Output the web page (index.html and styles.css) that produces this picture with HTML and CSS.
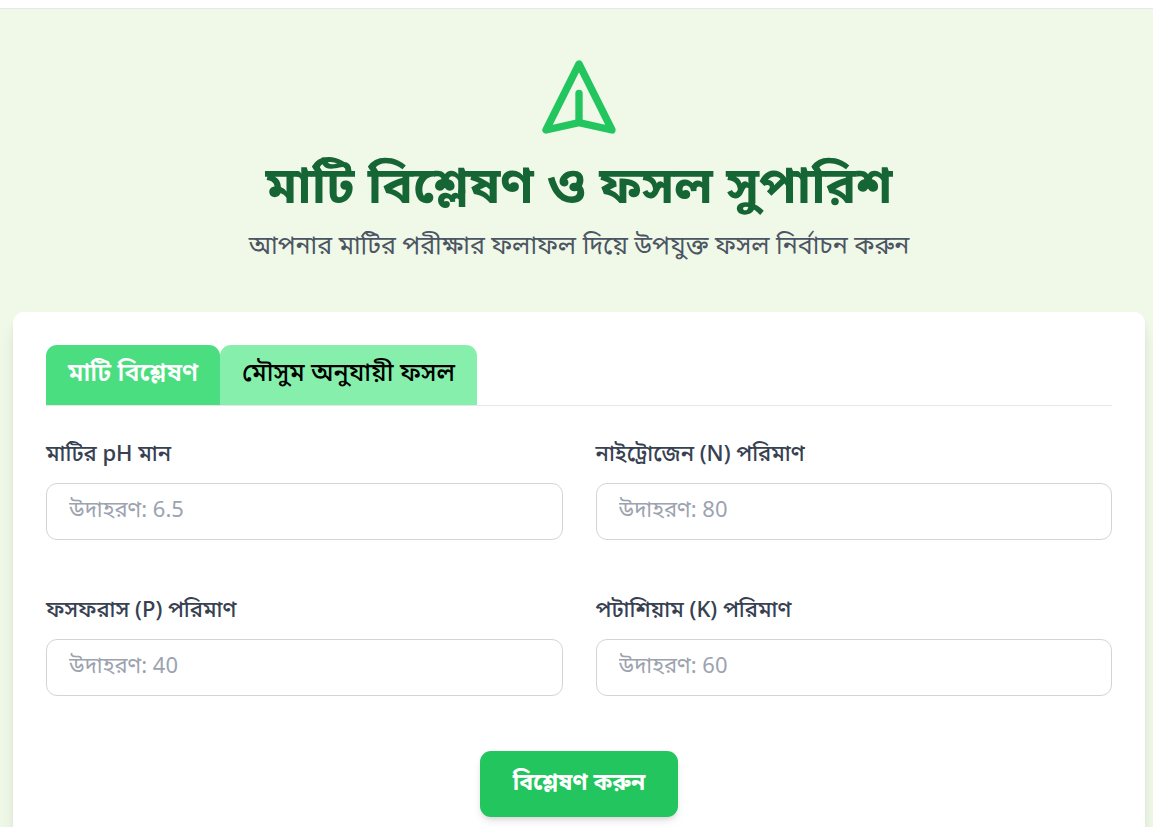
FILE: index.html
```html
<!DOCTYPE html>
<html lang="bn">
<head>
<meta charset="utf-8">
<meta name="viewport" content="width=device-width, initial-scale=1">
<title>মাটি বিশ্লেষণ ও ফসল সুপারিশ</title>
<link rel="stylesheet" href="styles.css">
</head>
<body>
<header class="topbar"></header>
<main class="page">
  <section class="hero">
    <svg class="hero-icon" viewBox="0 0 24 24" fill="none" stroke="currentColor" stroke-width="2" stroke-linecap="round" stroke-linejoin="round" aria-hidden="true"><path d="M12 19l9 2-9-18-9 18 9-2zm0 0v-8"/></svg>
    <h1 class="title">মাটি বিশ্লেষণ ও ফসল সুপারিশ</h1>
    <p class="subtitle">আপনার মাটির পরীক্ষার ফলাফল দিয়ে উপযুক্ত ফসল নির্বাচন করুন</p>
  </section>
  <section class="card">
    <div class="tabs" role="tablist">
      <button class="tab tab-active" type="button" role="tab" aria-selected="true">মাটি বিশ্লেষণ</button>
      <button class="tab" type="button" role="tab" aria-selected="false">মৌসুম অনুযায়ী ফসল</button>
    </div>
    <form class="form">
      <div class="fields">
        <div class="field"><label class="label" for="ph">মাটির pH মান</label><input class="input" id="ph" type="text" placeholder="উদাহরণ: 6.5"></div>
        <div class="field"><label class="label" for="n">নাইট্রোজেন (N) পরিমাণ</label><input class="input" id="n" type="text" placeholder="উদাহরণ: 80"></div>
        <div class="field"><label class="label" for="p">ফসফরাস (P) পরিমাণ</label><input class="input" id="p" type="text" placeholder="উদাহরণ: 40"></div>
        <div class="field"><label class="label" for="k">পটাশিয়াম (K) পরিমাণ</label><input class="input" id="k" type="text" placeholder="উদাহরণ: 60"></div>
      </div>
      <div class="actions"><button class="submit" type="button">বিশ্লেষণ করুন</button></div>
    </form>
  </section>
</main>
</body>
</html>
```
FILE: styles.css
```css
* { box-sizing: border-box; }
body {
  margin: 0;
  background: #f0f8e8;
  color: #000;
  font-family: "Noto Sans Bengali", "Noto Sans", sans-serif;
  font-size: 22px;
  line-height: 33px;
}
button, input { font: inherit; }
.topbar { height: 9px; background: #fff; border-bottom: 1px solid #e5e7eb; }
.page { padding: 44px 8px 0 13px; overflow: hidden; }
.hero { text-align: center; margin-bottom: 45px; }
.hero-icon { display: block; width: 88px; height: 88px; margin: 0 auto 22px; color: #22c55e; }
.title { margin: 0 0 11px; color: #166534; font-size: 51px; line-height: 55px; font-weight: 700; }
.subtitle { margin: 0; color: #4b5563; font-size: 25px; line-height: 38px; }
.card { background: #fff; border-radius: 11px; padding: 33px; box-shadow: 0 14px 20px -4px #0000001a, 0 5px 8px -3px #0000001a; }
.tabs { display: flex; border-bottom: 1px solid #e5e7eb; margin-bottom: 33px; }
.tab { border: 0; padding: 11px 22px; line-height: 38px; background: #86efac; color: #000; font-size: 25px; font-weight: 500; border-radius: 11px 11px 0 0; }
.tab-active { background: #4ade80; color: #fff; font-weight: 600; }
.fields { display: grid; grid-template-columns: 1fr 1fr; gap: 55px 33px; }
.field { display: flex; flex-direction: column; gap: 11px; }
.label { color: #374151; font-weight: 500; }
.input { width: 100%; height: 57px; padding: 0 22px; border: 1px solid #d1d5db; border-radius: 11px; background: #fff; color: #000; }
.input::placeholder { color: #9ca3af; opacity: 1; }
.actions { display: flex; justify-content: center; margin-top: 55px; }
.submit { border: 0; padding: 17px 33px 16px; border-radius: 11px; background: #22c55e; color: #fff; font-size: 23px; font-weight: 700; box-shadow: 0 5px 8px -1px #0000001a, 0 3px 5px -2px #0000001a; }
```
